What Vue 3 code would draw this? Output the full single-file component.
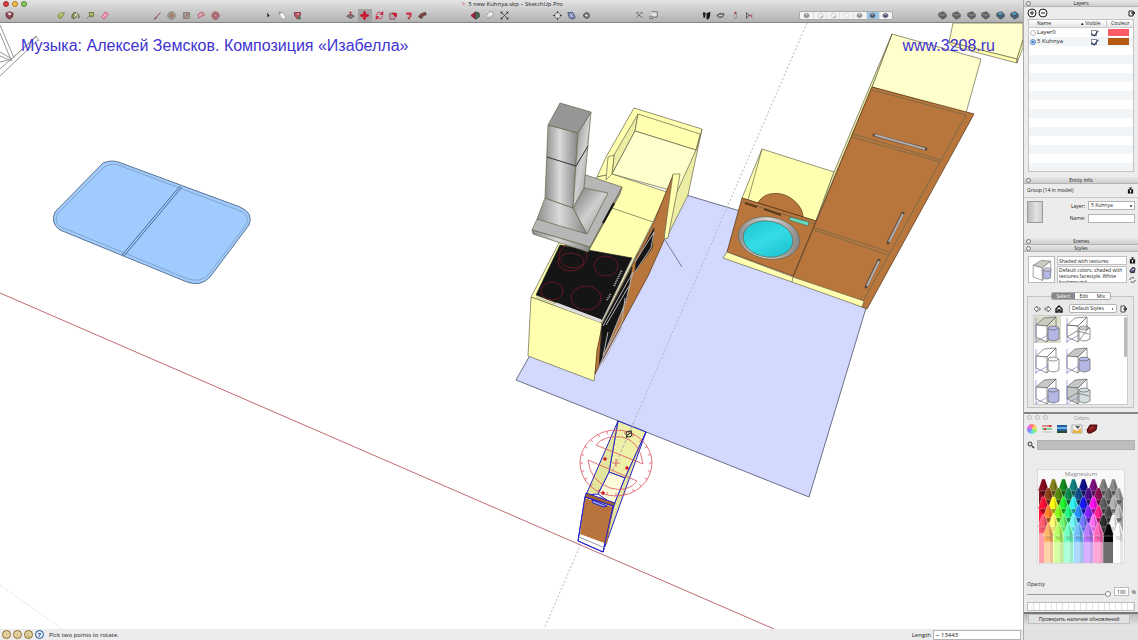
<script setup>
import { ref } from 'vue'

const R = '#b8142e'
const icons = {
  select3d: [['M1 3L6 1L11 3L10 8L6 11L2 8Z', '#8c4450', '#5c2c34'], ['M3 3L6 2L9 4L6 6Z', '#f2dfe0', 'none']],
  tape: [['M1 6Q3 2 10 2L8 6Q7 10 3 10Z', '#a9b45c', '#76803a'], ['M4 5L8 4', 'none', '#e4eaa6']],
  text: [['M1 9Q1 2 6 2Q11 3 11 9L8 7L4 10Z', '#8f9a60', '#4c5238'], ['M5 8L7 3L9 8', 'none', '#fff']],
  paint: [['M1 10L5 6', 'none', '#5c6420'], ['M4 2L10 2L10 7L6 8Z', '#a9b050', '#5e6430'], ['M6 4L8 4', 'none', '#eee']],
  eraser: [['M2 8L7 1L11 4L6 11Z', '#ee92a8', '#c25f78'], ['M4 8L8 4', 'none', '#fbd6de']],
  pencil: [['M2 11L10 2', 'none', '#9c1c34'], ['M2 11L5 8', 'none', '#222']],
  circle: [['M6 1A5 5 0 1 0 6.1 1Z', '#a6a294', '#77736a'], ['M6 4A2 2 0 1 0 6.1 4', '#996', '#a04450']],
  rect: [['M2 2H10V10H2Z', '#a39a92', '#7c7470'], ['M3 9L9 3', 'none', '#a04450']],
  arc: [['M2 9Q0 2 7 2Q12 4 8 7', '#dcb0b6', '#a83850'], ['M2 10L8 5', 'none', '#a83850']],
  polygon: [['M6 1L10 3L11 7L8 11H4L1 7L2 3Z', '#b88088', '#983848'], ['M6 4A2 2 0 1 0 6.1 4', '#c8a0a4', '#883040']],
  arrow: [['M4 2L8 7H6L5 9Z', '#111', 'none']],
  lasso: [['M2 1L7 3L11 9L7 11L3 7Z', '#f6f6f6', '#999'], ['M1 3L4 2', 'none', '#555']],
  bucket: [['M2 2H10L9 9L6 11L2 6Z', '#bc5266', '#7e2438'], ['M5 3H8L7 6Z', '#f3c4cb', 'none'], ['M8 6L11 11H6Z', '#3f7c4a', 'none']],
  push: [['M1 7L6 4L11 7L6 10Z', '#8c7c7c', '#4c4444'], ['M6 6V1M4 3L6 1L8 3', 'none', R]],
  move: [['M6 0L8 3H7V5H9V4L12 6L9 8V7H7V9H8L6 12L4 9H5V7H3V8L0 6L3 4V5H5V3H4Z', '#cc1432', '#cc1432']],
  rotate: [['M2 6A4 4 0 0 1 9 3M10 6A4 4 0 0 1 3 9', 'none', '#d01030'], ['M6 5H11V0Z M6 7H1V12Z', '#d01030', 'none']],
  scale: [['M1 3H8V11H1Z', '#b8a09c', '#846'], ['M4 3H10V8Z', '#c4122c', '#c4122c']],
  offset: [['M3 2H10V8H7V5H3Z', '#cf3048', 'none'], ['M5 8H8V11H5Z', '#a44', 'none']],
  follow: [['M1 8Q2 3 10 2L11 5Q6 5 5 10Z', '#7a4c48', '#452c2a'], ['M5 5L9 3', 'none', '#c33']],
  orbit: [['M0 6L5 2V10Z', '#b02038', '#703'], ['M6 1V11L11 8V3Z', '#4e6d50', '#333']],
  hand: [['M3 10L2 6L6 1H10L11 5L6 10Z', '#f2f2f2', '#8a8a8a'], ['M4 10L7 6', 'none', '#777']],
  extents: [['M1 1L11 11M11 1L1 11', 'none', '#333'], ['M1 1H4L1 4ZM11 1H8L11 4ZM1 11H4L1 8ZM11 11H8L11 8Z', '#222', 'none']],
  compass: [['M6 2A4 4 0 1 0 6.1 2', '#ddd', '#666'], ['M6 0V3M6 9V12M0 6H3M9 6H12', 'none', '#222']],
  globe: [['M1 2H8L11 9L7 11L3 9Z', '#7888b4', '#44507a'], ['M4 4L8 8M8 3L4 8', 'none', '#dde']],
  prev: [['M6 2A4 4 0 1 0 6.1 2', '#999', '#555'], ['M8 3L2 6L8 9Z', '#eee', '#333']],
  axes: [['M2 9L9 2M2 3L10 9M2 2H5', 'none', '#555'], ['M8 1L10 3', 'none', '#222']],
  label: [['M3 1H11V8H6L3 11V8', '#e2e2e2', '#555'], ['M1 7H5V10H1Z', '#ccc', '#666']],
  feet: [['M1 2H5L4 9H2ZM6 3L11 1V6L9 11H6Z', '#181818', 'none']],
  eye: [['M1 6Q5 1 11 4Q10 9 5 9Z', '#8b8b8b', '#444'], ['M4 6H9', 'none', '#ddd']],
  pin: [['M5 2H7V10H5Z', '#eee', '#777'], ['M5 1H7V4H5Z', '#b33', 'none']],
  section: [['M2 2V10L5 6ZM5 6H8', 'none', '#444'], ['M6 5L10 9M10 4L7 7', 'none', R]],
  cube: [['M2 4L6 2L10 4V8L6 10L2 8Z', '#999', '#777'], ['M4 4L6 3L8 4L6 5Z', '#fff', 'none']],
  cubeW: [['M2 4L6 2L10 4V8L6 10L2 8Z', '#f4f4f4', '#bbb'], ['M6 10L10 8', 'none', '#444']],
  cubeD: [['M2 4L6 2L10 4V8L6 10L2 8Z', '#557', '#556'], ['M3 4L6 3L8 4L6 6Z', '#aab6b4', 'none']],
  cubeG: [['M2 4L6 2L10 4V8L6 10L2 8Z', '#fafafa', '#ccc']],
  comp: [['M1 3L7 1L11 4V8L6 11L1 7Z', '#626262', '#555'], ['M2 4L6 6L10 4', 'none', '#aaa']],
  compB: [['M1 3L7 1L11 4V8L6 11L1 7Z', '#4b5f6e', '#4c5862'], ['M2 3L7 2L9 4L5 5Z', '#4fb0dd', 'none']],
}
const groups = [
  { n: 1, items: ['select3d'] },
  { n: 4, items: ['tape', 'text', 'paint', 'eraser'] },
  { n: 5, items: ['pencil', 'circle', 'rect', 'arc', 'polygon'] },
  { n: 3, items: ['arrow', 'lasso', 'bucket'] },
  { n: 6, items: ['push', 'move', 'rotate', 'scale', 'offset', 'follow'], active: 'move' },
  { n: 3, items: ['orbit', 'hand', 'extents'] },
  { n: 3, items: ['compass', 'globe', 'prev'] },
  { n: 2, items: ['axes', 'label'] },
  { n: 4, items: ['feet', 'eye', 'pin', 'section'] },
  { n: 7, seg: true, items: ['cube', 'cubeW', 'cubeW', 'cubeG', 'cube', 'cubeD', 'cubeD'], activeIndex: 5 },
  { n: 6, items: ['comp', 'comp', 'comp', 'comp', 'compB', 'compB'] },
]
const isActive = (g, name, i) => g.active === name || g.activeIndex === i

const layers = ref([
  { name: 'Layer0', visible: true, color: 'red', current: false },
  { name: '5 Kuhnya', visible: true, color: 'brown', current: true },
])
const layerName = ref('5 Kuhnya')
const entityName = ref('')
const styleName = ref('Shaded with textures')
const styleText = ref('Default colors, shaded with textures facestyle. White background.')
const length = ref('~ 13443')
const opacity = ref(100)

const styles = [
  { side: '#c9ccc0', cyl: '#b4b6e4', picked: true },
  { side: 'none', cyl: 'none', wire: true },
  { side: '#fff', cyl: '#fff' },
  { side: '#c8c8c8', cyl: '#b4b6e4' },
  { side: '#c8c8c8', cyl: '#b4b6e4' },
  { side: '#c4c8c8', cyl: '#d5dcdf', wire: true },
]

const palette = [
  ['#850b20', '#85801c', '#168a20', '#118080', '#10108a', '#800f80', '#808080', '#8a8a8a'],
  ['#8e4018', '#568a10', '#108a50', '#10508a', '#4c108a', '#8a1050', '#6c6c6c', '#a0a0a0'],
  ['#ff1038', '#ffff10', '#20f830', '#30f4f4', '#1818f4', '#ff10f0', '#606060', '#b4b4b4'],
  ['#ff8428', '#88ff20', '#20f888', '#2890ff', '#8824ff', '#ff2490', '#484848', '#c4c4c4'],
  ['#ff5c70', '#ffff70', '#70f870', '#70f8f8', '#7078ff', '#ff70f4', '#303030', '#f4f4f4'],
  ['#ffb468', '#b8ff68', '#70ffc0', '#70bcff', '#bc78ff', '#ff68b8', '#080808', '#ffffff'],
]
const crayons = palette.flatMap((row, r) =>
  row.map((color, c) => ({ color, x: 1 + c * 10 + (r % 2) * 5, y: 10 + r * 9, last: r > 3 }))
)

const ticks = Array.from({ length: 24 }, (_, i) => {
  const a = (i * Math.PI) / 12
  return { x1: 616 + 36 * Math.cos(a), y1: 463 + 33 * Math.sin(a), x2: 616 + 33 * Math.cos(a), y2: 463 + 30 * Math.sin(a) }
})
</script>

<template>
  <div class="app">
    <main class="window">
      <header class="chrome">
        <div class="titlebar">
          <div class="lights"><i class="red"></i><i class="amber"></i><i class="green"></i></div>
          <h1><svg viewBox="0 0 6 6"><path d="M1 1L5 2L4 5Z" fill="#d99" /></svg>5 new Kuhnya.skp – SketchUp Pro</h1>
        </div>
        <nav class="toolbar">
          <div v-for="(g, gi) in groups" :key="gi" class="group" :class="['n' + g.n, { seg: g.seg }]">
            <button v-for="(name, i) in g.items" :key="i" type="button" :aria-label="name" :class="{ on: isActive(g, name, i) }">
              <svg viewBox="0 0 12 12"><path v-for="(p, k) in icons[name]" :key="k" :d="p[0]" :fill="p[1]" :stroke="p[2]" /></svg>
            </button>
          </div>
        </nav>
      </header>

      <section class="canvas">
        <svg class="scene" viewBox="0 23 1023 606" preserveAspectRatio="xMinYMin slice">
          <defs>
            <linearGradient id="steel" x1="0" x2="1"><stop offset="0" stop-color="#8e8e8e" /><stop offset=".45" stop-color="#dadada" /><stop offset="1" stop-color="#858585" /></linearGradient>
            <linearGradient id="steel2" x1="0" x2="1" y1="0" y2="1"><stop offset="0" stop-color="#777" /><stop offset=".5" stop-color="#d0d0d0" /><stop offset="1" stop-color="#888" /></linearGradient>
            <linearGradient id="aqua" x1="0" x2="1" y1="0" y2="1"><stop offset="0" stop-color="#1cc4d2" /><stop offset=".5" stop-color="#35dbe6" /><stop offset="1" stop-color="#18bccd" /></linearGradient>
          </defs>
          <g class="thin">
            <path d="M0 25L14 58M0 33L11 60M0 52L12 59M0 56L12 61M0 62L12 59M0 69L37 36M0 76L38 40M36 36L39 41M14 57L36 36" stroke="#999" fill="none" />
            <path d="M0 293L774 629" stroke="#c06a72" />
            <path d="M0 585L62 629" stroke="#ccc" stroke-dasharray="1 2" />
            <path class="floor" d="M516 380L529 357L600 300L686 195L740 211L760 265L866 308L809 497Z" />
            <path d="M807 23L544 629" stroke="#b8b8bc" stroke-dasharray="2 2" />
          </g>

          <g class="sink">
            <path d="M103 163Q112 159 121 163L240 207Q254 213 249 225L210 277Q201 287 187 282L60 230Q50 223 55 212Z" />
            <path d="M104 167Q113 162 121 166L238 210Q251 214 246 225L209 274Q201 283 188 279L61 227Q53 222 58 213Z" class="rim" />
            <path d="M180 186L122 255M182 187L124 256" class="bar" />
          </g>

          <g class="part">
            <path class="y2" d="M702 129L688 195L666 239L677 182L696 150Z" />
            <path class="y1" d="M634 108L702 129L696 150L635 131L612 174L597 177L606 157Z" />
            <path class="y2" d="M638 114L635 131L612 174L614 155Z" />
            <path class="y1" d="M638 114L700 134L696 150L635 131Z" />
            <path class="y3" d="M635 131L696 150L677 192L612 174Z" />
            <path class="y1" d="M597 177L612 174L667 192L653 222L602 323L531 297L559 243Z" />
            <path class="y1" d="M608 157L614 155L612 174L606 180Z" />
            <path d="M612 208L653 222" />
            <path class="y1" d="M531 297L602 323L594 381L528 356Z" />
            <path class="wood" d="M673 175L676 182L665 238L648 276L595 374L597 350L603 323L654 222Z" />
            <path class="y1" d="M673 174L680 174L677 192L668 238L664 239L670 195Z" />
            <path class="black" d="M654 228L652 248L635 272L636 262ZM602 325L632 267L627 298L599 367Z" />
            <path d="M635 262L654 232L651 248L635 272M603 326L633 272L626 301L599 367M608 332L603 356L622 322L625 298M606 325L629 286M603 363L622 327" class="metal" />
            <path d="M632 260L596 377" stroke="none" />
            <path class="black" d="M560 245L632 258L602 320L536 295Z" />
            <path d="M536 297L602 321L632 259" class="metal" />
            <path d="M556 304L601 321" stroke="#ddd" stroke-width="3" />
            <g class="burner">
              <ellipse cx="573" cy="256" rx="14" ry="12" /><ellipse cx="571" cy="262" rx="13" ry="9" />
              <ellipse cx="606" cy="266" rx="12" ry="10" /><ellipse cx="552" cy="291" rx="11" ry="9" /><ellipse cx="586" cy="298" rx="15" ry="12" />
            </g>
            <path d="M607 300L611 293M614 286L622 270" stroke="#bbb" stroke-width="2" stroke-dasharray="1 1" />
            <path d="M665 240L682 267" stroke="#555" />
          </g>

          <g class="part">
            <path fill="#b6b6b6" d="M586 175L622 187L590 247L532 230L537 219Z" />
            <path fill="url(#steel)" d="M532 230L590 247L588 252L533 234Z" />
            <path fill="#999" d="M622 187L620 194L588 252L590 247Z" />
            <path d="M614 203L603 223" stroke="#111" stroke-width="2" />
            <path fill="url(#steel)" d="M545 198L573 208L587 234L537 219Z" />
            <path fill="url(#steel2)" d="M573 208L584 188L608 193L587 234Z" />
            <path fill="url(#steel)" d="M548 125L578 133L573 208L545 198Z" />
            <path fill="url(#steel2)" d="M578 133L591 112L584 188L573 208Z" />
            <path fill="#969696" d="M560 103L591 112L578 133L548 125Z" />
            <path d="M547 157L576 166L588 146" fill="none" stroke="#333" stroke-width="1" />
          </g>

          <g class="part">
            <path class="y3" d="M953 23L949 42L1017 59L1023 40V23Z" />
            <path class="y1" d="M949 42L1017 59L1017 63L952 46ZM1017 59L1023 40V48L1017 63Z" />
            <path class="y3" d="M892 34L981 59L966 113L872 87Z" />
            <path class="y1" d="M762 149L834 172L816 221L742 198Z" />
            <path d="M762 149L748 200" />
            <path class="wood" d="M758 203C764 191 782 191 792 199C799 204 803 211 803 217Z" />
            <path class="y2" d="M892 34L872 87L816 221L834 172Z" />
            <path class="wood" d="M872 87L974 114L867 309L793 277L816 222Z" />
            <path d="M872 90L966 115L941 160L890 253L862 303M853 134L941 160M852 137L940 162M815 228L890 252M814 230L888 255" fill="none" />
            <path class="wood" d="M742 198L816 221L793 276L727 252Z" />
            <path d="M741 201L815 224" />
            <path class="y1" d="M727 252L793 277L864 301L862 307L792 282L723 258ZM793 277L792 282" />
            <path d="M874 135L926 149" class="handle" /><path d="M875 135L925 149" class="shine" />
            <path d="M903 213L888 243M879 260L866 287" class="handle" /><path d="M903 214L889 242M879 261L867 286" class="shine" />
            <ellipse cx="769" cy="238" rx="31" ry="21" transform="rotate(9 769 238)" fill="url(#steel)" />
            <ellipse cx="768" cy="239" rx="25" ry="18" transform="rotate(9 768 239)" fill="url(#aqua)" />
            <path d="M745 203L757 207M764 209L781 215" stroke="#5c3a1c" stroke-width="2" />
            <path d="M790 217L809 222L808 226L789 220Z" fill="#61dcc0" />
          </g>

          <g class="picked">
            <path fill="#eff0a8" d="M618 421L646 432L625 478L609 472Z" />
            <path fill="#fbfbdc" d="M609 472L625 478L614 505L598 494Z" />
            <path fill="#e4e59c" d="M618 421L609 472L598 494L586 495Z" />
            <path fill="#e4e59c" d="M646 432L603 552L614 505L625 478Z" />
            <path fill="#a26232" d="M586 493L615 503L613 507L585 497Z" />
            <path fill="#fff" d="M585 497L613 506L603 552L578 541Z" />
            <path fill="#b8743c" stroke="none" d="M585 498L613 507L607 544L580 534Z" />
            <path fill="none" d="M585 497L613 506L603 552L578 541Z" />
            <path fill="none" stroke="#99a" d="M579 537L605 548" />
            <path fill="#a9b4e8" d="M592 500L607 506L604 507L593 503Z" />
          </g>
          <path d="M634 422L610 477" stroke="#aaa" stroke-dasharray="3 2" />
          <g class="protractor">
            <ellipse cx="616" cy="463" rx="36" ry="33" />
            <path v-for="(t, i) in ticks" :key="i" :d="`M${t.x1} ${t.y1}L${t.x2} ${t.y2}`" />
            <path d="M596 445L643 464Q640 441 622 437Q604 435 596 445ZM588 460L637 481Q628 493 610 488Q590 481 588 460ZM612 463H620M616 459V467" />
            <path d="M603 459L605 457L607 459L605 461ZM625 468L627 466L629 468L627 470ZM601 493L603 491L605 493L603 495Z" fill="#d02020" />
          </g>
          <g fill="none" stroke="#222"><circle cx="629" cy="434" r="3" /><path d="M627 435L631 433M631 430V432M626 438L627 436" /></g>
        </svg>
        <p class="credit">Музыка: Алексей Земсков. Композиция «Изабелла»</p>
        <a class="site" href="#site">www.3208.ru</a>
      </section>

      <footer class="status">
        <button type="button" class="dot">!</button><button type="button" class="dot">i</button><button type="button" class="dot">L</button><button type="button" class="dot help">?</button>
        <span class="hint">Pick two points to rotate.</span>
        <label for="len">Length</label><input id="len" v-model="length" type="text" />
      </footer>
    </main>

    <aside class="side">
      <section class="inspector">
        <h2><i></i>Layers</h2>
        <div class="layertools">
          <button type="button" aria-label="Add layer"><svg viewBox="0 0 10 10"><circle cx="5" cy="5" r="4" /><path d="M5 3V7M3 5H7" /></svg></button>
          <button type="button" aria-label="Delete layer"><svg viewBox="0 0 10 10"><circle cx="5" cy="5" r="4" /><path d="M3 5H7" /></svg></button>
          <button type="button" class="end" aria-label="Layer details"><svg viewBox="0 0 10 10"><path d="M3 3H7V8H3ZM5 5H9M7 3L9 5L7 7" /></svg></button>
        </div>
        <div class="tablewrap">
          <table>
            <thead><tr><th class="c0"></th><th>Name</th><th class="c2">▴ Visible</th><th class="c3">Couleur</th></tr></thead>
            <tbody>
              <tr v-for="l in layers" :key="l.name">
                <td><input type="radio" name="layer" :checked="l.current" :aria-label="'Current ' + l.name" /></td>
                <td>{{ l.name }}</td>
                <td class="mid"><input v-model="l.visible" type="checkbox" :aria-label="'Visible ' + l.name" /></td>
                <td><span class="swatch" :class="l.color"></span></td>
              </tr>
              <tr v-for="n in 14" :key="n"><td colspan="4"></td></tr>
            </tbody>
          </table>
        </div>

        <h2><i></i>Entity Info</h2>
        <div class="entity">
          <div class="row"><span>Group (14 in model)</span><svg class="mini" viewBox="0 0 8 8"><path d="M1 3H7V8H1ZM2 1H6L4 3Z" fill="#111" /><path d="M4 4V7M3 5H5" stroke="#fff" /></svg></div>
          <div class="fields">
            <div class="mat"></div>
            <label for="lay">Layer:</label>
            <select id="lay" v-model="layerName"><option>5 Kuhnya</option><option>Layer0</option></select>
            <label for="nam">Name:</label>
            <input id="nam" v-model="entityName" type="text" />
          </div>
        </div>

        <h2><i></i>Scenes</h2>
        <h2><i></i>Styles</h2>
        <div class="stylehead">
          <div class="preview"><svg viewBox="0 0 30 30"><path d="M5 10L15 4L26 5L16 13Z" fill="#c9ccc0" /><path d="M5 10L16 13V28L5 24Z" fill="#fff" /><path d="M16 13L26 5V20L16 28Z" fill="#fff" /><path d="M17 15V25Q22 28 26 25V15Z" fill="#b4b6e4" /><ellipse cx="22" cy="15" rx="5" ry="2" fill="#ccd" /></svg></div>
          <div class="desc"><input v-model="styleName" type="text" aria-label="Style name" /><textarea v-model="styleText" aria-label="Style description"></textarea></div>
          <div class="acts">
            <svg viewBox="0 0 8 8"><path d="M1 3H7V8H1ZM2 1H6L4 3Z" fill="#111" /><path d="M4 4V7M3 5H5" stroke="#fff" /></svg>
            <svg viewBox="0 0 8 8"><path d="M1 5L4 1L7 2L6 7L2 7Z" fill="#557" stroke="#223" /><path d="M3 4L6 3" stroke="#fff" /></svg>
            <svg viewBox="0 0 8 8"><path d="M1 4A3 3 0 0 1 6 2M7 4A3 3 0 0 1 2 6" fill="none" stroke="#444" /></svg>
          </div>
        </div>
        <div class="browser">
          <div class="tabs"><button type="button" class="on">Select</button><button type="button">Edit</button><button type="button">Mix</button></div>
          <div class="navrow">
            <button type="button" aria-label="Back"><svg viewBox="0 0 8 8"><path d="M4 1L1 4L4 7V5H7V3H4Z" /></svg></button>
            <button type="button" aria-label="Forward"><svg viewBox="0 0 8 8"><path d="M4 1L7 4L4 7V5H1V3H4Z" /></svg></button>
            <button type="button" aria-label="Home"><svg viewBox="0 0 8 8"><path d="M1 4L4 1L7 4V7H5V5H3V7H1Z" stroke="#111" stroke-width="1.4" /></svg></button>
            <select aria-label="Style collection"><option>Default Styles</option></select>
            <button type="button" aria-label="Details"><svg viewBox="0 0 8 8"><path d="M1 1H5V7H1ZM3 4H7L5 2V6L7 4" stroke="#222" /></svg></button>
          </div>
          <div class="thumbs">
            <button v-for="(s, i) in styles" :key="i" type="button" :aria-label="'Style ' + (i + 1)" :class="{ picked: s.picked }">
              <svg viewBox="0 0 27 27">
                <path d="M2 9L10 2L22 1L13 10Z" :fill="s.side" /><path d="M2 9L13 10V26L2 21Z" :fill="s.wire ? s.side : '#fff'" /><path d="M13 10L22 1V14L13 26" fill="none" />
                <path d="M14 12V23Q19 27 25 23V12Z" :fill="s.cyl" /><ellipse cx="19" cy="12" rx="5" ry="2" :fill="s.cyl" />
                <path v-if="s.wire" d="M2 21L12 15L24 18" fill="none" />
                <path d="M2 2V27M1 26L14 19" stroke="#88c" fill="none" />
              </svg>
            </button>
            <i class="scroll"></i>
          </div>
        </div>
      </section>

      <section class="colors">
        <h2><i></i><i></i><i></i><span>Colors</span></h2>
        <div class="modes">
          <button type="button" class="wheel" aria-label="Wheel"></button>
          <button type="button" aria-label="Sliders"><svg viewBox="0 0 12 10"><path fill="#eee" d="M1 0H11V10H1Z" /><path stroke="#d88" d="M1 2H11" stroke-width="2" /><path stroke="#8c9" d="M1 5H11" stroke-width="2" /><path stroke="#bbb" d="M1 8H11" /><path fill="#c33" d="M8 1H10V3H8ZM3 4H5V6H3Z" /></svg></button>
          <button type="button" aria-label="Palettes"><svg viewBox="0 0 12 10"><path fill="#235e9e" d="M1 1H11V9H1Z" /><path fill="#6ab4e0" d="M1 3H11V5H1Z" /><path fill="#2c4a2c" d="M1 7H11V9H1Z" /></svg></button>
          <button type="button" aria-label="Image"><svg viewBox="0 0 12 10"><path fill="#f3f3f3" stroke="#aaa" d="M1 1H11V9H1Z" /><path fill="#e8b23c" d="M2 5L6 7L10 4V9H2Z" /><path fill="#555" d="M4 2H9L7 5Z" /></svg></button>
          <button type="button" aria-label="Crayons"><svg viewBox="0 0 12 10"><path fill="#7c1818" stroke="#4a0c0c" d="M1 6L4 1L11 1L10 6L5 9L2 9Z" /><path stroke="#c44" d="M4 5L8 3" /></svg></button>
        </div>
        <div class="search"><svg viewBox="0 0 8 8"><circle cx="3" cy="3" r="2" fill="none" stroke="#333" /><path d="M5 5L7 7" stroke="#333" stroke-width="1.5" /></svg><span class="current"></span></div>
        <div class="crayonbox">
          <p>Magnesium</p>
          <svg viewBox="0 10 86 84">
            <g v-for="(c, i) in crayons" :key="i">
              <rect :x="c.x" :y="c.y + 10" width="9" height="86" :fill="c.color" />
              <rect :x="c.x + 6" :y="c.y + 10" width="3" height="86" fill="#000" opacity=".16" />
              <path :d="`M${c.x - 1} ${c.y + 12}L${c.x + 3} ${c.y}H${c.x + 6}L${c.x + 10} ${c.y + 12}Z`" :fill="c.color" stroke="#fff" stroke-opacity=".5" stroke-width=".6" />
              <path :d="`M${c.x + 5} ${c.y}L${c.x + 9} ${c.y + 12}H${c.x + 6}Z`" fill="#000" opacity=".22" />
              <path :d="`M${c.x + 1} ${c.y + 12}H${c.x + 8}L${c.x + 6} ${c.y + 16}H${c.x + 3}Z`" fill="#000" :opacity="c.last ? 0.12 : 0.4" />
              <rect v-if="c.last" :x="c.x" :y="c.y + 18" width="9" height="80" fill="#fff" opacity=".42" />
            </g>
          </svg>
        </div>
        <label class="oplabel" for="op">Opacity</label>
        <div class="oprow"><input id="op" v-model="opacity" type="range" min="0" max="100" /><input v-model="opacity" class="num" type="text" aria-label="Opacity percent" /><span>%</span></div>
        <div class="wells"><i v-for="n in 18" :key="n"></i></div>
      </section>

      <section class="under"><button type="button">Проверить наличие обновлений</button></section>
    </aside>
  </div>
</template>

<style>
html, body { background: #fff; overflow: hidden; }
</style>

<style scoped>
* { box-sizing: border-box; }
.app { display: grid; grid-template-columns: minmax(0, 1fr) 115px; height: 100vh; font: 6px/8px "Open Sans", "Noto Sans", sans-serif; color: #222; overflow: hidden; }
button, input, select, textarea { font: inherit; color: inherit; margin: 0; padding: 0; border: 0; background: none; border-radius: 0; appearance: none; outline: 0; }
svg { display: block; }
h1, h2, p { margin: 0; font-weight: 400; font-size: 6px; }
.window { display: flex; flex-direction: column; min-width: 0; height: 100vh; }
.chrome { background: linear-gradient(#e4e4e4, #d2d2d2 35%, #b2b2b2); border-bottom: 1px solid #858585; height: 23px; overflow: hidden; }
.titlebar { height: 8px; display: grid; grid-template-columns: 1fr auto 1fr; align-items: center; }
.titlebar h1 { display: flex; align-items: center; gap: 2px; }
.titlebar h1 svg { width: 6px; height: 6px; }
.lights { display: flex; gap: 3px; padding-left: 3px; }
.lights i { width: 6px; height: 6px; border-radius: 50%; border: 1px solid #777; }
.lights .red { background: #e23c40; border-color: #9c3034; }
.lights .amber { background: #f3c050; border-color: #ad7c28; }
.lights .green { background: #90c860; border-color: #4e8438; }
.toolbar { display: flex; gap: 38px; padding-left: 2px; height: 15px; align-items: center; }
.group { display: grid; grid-auto-flow: column; grid-auto-columns: 1fr; height: 13px; flex: none; }
.n1 { width: 14px; } .n2 { width: 29px; } .n3 { width: 44px; } .n4 { width: 58px; } .n5 { width: 73px; } .n6 { width: 87px; }
.n7 { width: 94px; }
.group button { display: grid; place-items: center; }
.group svg { width: 9px; height: 9px; }
.group .on { background: #a2a2a2; }
.seg { margin: 0 4px; background: #f3f3f3; border: 1px solid #aaa; border-radius: 2px; height: 9px; align-self: center; }
.seg svg { width: 7px; height: 7px; }
.seg button + button { border-left: 1px solid #dedede; }
.seg .on { background: #9cc8e8; }
.canvas { position: relative; flex: 1; min-height: 0; overflow: hidden; background: #fff; }
.scene { width: 100%; height: 100%; }
.thin { stroke-width: 1; }
.floor { fill: #d3d8ff; stroke: #6c7088; }
.sink path { fill: #a0cbff; stroke: #5c7590; }
.sink .rim { fill: none; stroke: #83a4c8; }
.sink .bar { stroke: #486a94; }
.part { stroke: #66654c; stroke-width: .7; }
.part .y1 { fill: #ffffaf; } .part .y2 { fill: #ededa4; } .part .y3 { fill: #ffffcc; }
.part .wood { fill: #b9763c; stroke: #4f2f12; }
.part .black { fill: #151516; stroke: #222; }
.part .metal { fill: none; stroke: #b4b4b4; stroke-width: 1; }
.burner { fill: none; stroke: #641822; stroke-width: 1; }
.handle { stroke: #5c4c40; stroke-width: 3; stroke-linecap: round; }
.shine { stroke: #b0acac; stroke-width: 2; }
.picked { stroke: #2422c4; stroke-width: 1; stroke-linejoin: round; }
.protractor { fill: none; stroke: #dc5260; stroke-width: .8; }
.credit, .site { position: absolute; top: 13px; font: 16px/20px "Liberation Sans", Arial, sans-serif; color: #3e33d2; white-space: nowrap; text-decoration: none; }
.credit { left: 21px; }
.site { right: 28px; }
.status { height: 11px; background: #ececec; display: flex; align-items: center; padding: 0 2px; gap: 2px; }
.dot { width: 9px; height: 9px; border: 1px solid #8a6c30; border-radius: 50%; background: #e6d3a2; font-size: 5px; line-height: 6px; color: #a07c34; text-align: center; }
.help { background: #e2ecfa; border-color: #24508c; color: #123c80; font-weight: 700; font-size: 6px; }
.hint { flex: 1; padding-left: 3px; }
.status input { width: 88px; height: 10px; background: #fff; border: 1px solid #b4b4b4; padding-left: 2px; }

.side { display: flex; flex-direction: column; border-left: 1px solid #aaa; background: #ececec; min-width: 0; height: 100vh; overflow: hidden; font-size: 5px; }
.side h2 { position: relative; height: 7px; line-height: 7px; font-size: 5px; text-align: center; background: linear-gradient(#e8e8e8, #cecece); border-bottom: 1px solid #b4b4b4; }
.inspector h2 i { position: absolute; left: 2px; top: 1px; width: 5px; height: 5px; border: 1px solid #777; border-radius: 50%; background: #eee; }
.inspector { border-bottom: 2px solid #858585; height: 414px; flex: none; }
.layertools { display: flex; gap: 1px; padding: 1px 2px 1px 3px; height: 12px; align-items: center; }
.layertools svg { width: 10px; height: 10px; fill: #f3f3f3; stroke: #222; }
.layertools .end { margin-left: auto; }
.tablewrap { margin: 0 4px 5px; background: #fff; border: 1px solid #c4c4c4; height: 153px; overflow: hidden; }
table { width: 100%; border-collapse: collapse; table-layout: fixed; }
th { height: 7px; padding: 0; font-weight: 400; line-height: 7px; background: linear-gradient(#fff, #e4e4e4); border-bottom: 1px solid #ccc; text-align: left; padding-left: 1px; }
td { height: 9px; line-height: 9px; padding: 0 0 0 1px; font-size: 6px; white-space: nowrap; }
tbody tr:nth-child(even) { background: #f1f5f8; }
.c0 { width: 7px; } .c2 { width: 26px; } .c3 { width: 27px; border-left: 1px solid #ccc; text-align: center; }
.mid { text-align: center; }
td input { display: block; width: 6px; height: 6px; border: 1px solid #aaa; background: #fff; position: relative; }
td input[type=radio] { border-radius: 50%; border-color: #bbb; }
td input[type=radio]:checked { background: #2b63b8; border: 1px solid #7fa7dc; box-shadow: inset 0 0 0 1px #cfe2f8; }
td input[type=checkbox] { margin: 0 auto; border-color: #889; }
td input[type=checkbox]:checked::after { content: ""; position: absolute; left: 1px; top: -2px; width: 3px; height: 6px; border: solid #1d2c50; border-width: 0 1px 1px 0; transform: rotate(40deg); }
.swatch { display: block; width: 21px; height: 7px; margin-left: 1px; }
.swatch.red { background: #fb5b68; } .swatch.brown { background: #b55a10; }
.entity { height: 54px; }
.row { display: flex; justify-content: space-between; align-items: center; padding: 0 4px 2px 3px; height: 14px; border-bottom: 1px solid #c8c8c8; }
.mini { width: 7px; height: 8px; }
.fields { display: grid; grid-template-columns: 16px 1fr 47px; gap: 3px 3px; padding: 3px 3px; align-items: center; text-align: right; }
.mat { grid-row: span 2; height: 22px; border: 1px solid #999; background: linear-gradient(90deg, #bbb, #e4e4e4 60%, #ccc); }
.fields select, .fields input, .navrow select { height: 9px; line-height: 7px; background: #fff; border: 1px solid #b4b4b4; padding-left: 2px; width: 100%; min-width: 0; }
.fields select { background: #fff linear-gradient(#666, #666) 41px 3px / 2px 2px no-repeat; }
.stylehead { display: grid; grid-template-columns: 27px 1fr 7px; gap: 2px; padding: 4px 2px 0 4px; height: 38px; }
.preview { height: 27px; background: #fff; border: 1px solid #bbb; }
.preview svg, .thumbs svg { width: 100%; height: 100%; stroke: #666; stroke-width: .7; }
.desc { display: grid; grid-template-rows: 9px 17px; gap: 1px; min-width: 0; }
.desc input, .desc textarea { display: block; width: 100%; height: 100%; background: #fff; border: 1px solid #c0c0c0; padding: 0 0 0 1px; line-height: 6px; resize: none; overflow: hidden; }
.acts { display: grid; gap: 2px; align-content: start; }
.acts svg { width: 7px; height: 8px; }
.browser { margin: 6px 4px 0 3px; border: 1px solid #c4c4c4; height: 112px; background: #e8e8e8; padding: 0 5px; }
.tabs { display: flex; width: 60px; margin: -5px auto 0; height: 8px; border: 1px solid #aaa; border-radius: 2px; background: #fff; overflow: hidden; }
.tabs button { flex: 1; line-height: 6px; }
.tabs .on { background: #888; color: #fff; flex: 1.4; }
.navrow { display: flex; align-items: center; gap: 3px; padding: 4px 0 2px; }
.navrow button { width: 8px; flex: none; }
.navrow svg { width: 8px; height: 8px; fill: #fff; stroke: #555; stroke-width: .8; }
.navrow select { flex: 1; margin-left: 3px; border-radius: 2px; background: #fff linear-gradient(#777, #777) calc(100% - 3px) 3px / 1px 2px no-repeat; }
.thumbs { position: relative; display: grid; grid-template-columns: 27px 27px; grid-auto-rows: 27px; gap: 4px; height: 90px; overflow: hidden; background: #fff; border: 1px solid #ccc; }
.thumbs .picked { background: #dcdccb; }
.scroll { position: absolute; right: 0; top: 1px; width: 3px; height: 40px; border-radius: 2px; background: #bbb; }
.colors { border-bottom: 2px solid #777; height: 200px; flex: none; background: #ebebeb; }
.colors h2 { background: none; border: 0; color: #888; height: 8px; display: flex; gap: 3px; padding: 1px 0 0 3px; }
.colors h2 i { width: 5px; height: 5px; border: 1px solid #bbb; border-radius: 50%; }
.colors h2 span { margin-left: 23px; }
.modes { display: flex; gap: 3px; padding: 1px 3px; height: 13px; align-items: center; }
.modes button, .modes svg { width: 12px; height: 10px; }
.modes .wheel { width: 10px; border-radius: 50%; margin-right: 1px; background: conic-gradient(#f77, #fd6, #8e6, #6de, #78f, #e6e, #f77); }
.search { display: flex; align-items: center; gap: 2px; padding: 0 3px; margin-top: 5px; }
.search svg { width: 8px; height: 8px; }
.current { flex: 1; height: 10px; background: #bebebe; border: 1px solid #b0b0b0; }
.crayonbox { width: 88px; margin: 19px auto 0; background: #f8f8f8; border: 1px solid #ddd; height: 95px; }
.crayonbox p { height: 9px; line-height: 8px; text-align: center; color: #888; }
.crayonbox svg { width: 86px; height: 84px; }
.oplabel { display: block; margin: 17px 0 0 3px; height: 7px; line-height: 7px; }
.oprow { display: flex; align-items: center; gap: 3px; padding: 0 2px 0 3px; height: 11px; margin-top: -2px; }
.oprow input[type=range] { flex: 1; min-width: 0; height: 6px; margin-top: 4px; background: linear-gradient(#999, #999) 0 3px / 100% 1px no-repeat; }
.oprow input[type=range]::-webkit-slider-thumb { appearance: none; width: 6px; height: 6px; border: 1px solid #888; border-radius: 50%; background: #fff; }
.num { width: 15px; height: 9px; border: 1px solid #bbb; background: #fff; text-align: center; }
.wells { display: flex; margin: 5px 3px 0; height: 9px; border: 1px solid #bbb; background: #fff; }
.wells i { flex: 1; border-right: 1px solid #e2e2e2; }
.under { flex: 1; background: linear-gradient(#bbb, #e4e4e4 12px, #e0e0e0); padding: 0 8px 0 4px; }
.under button { display: block; width: 100%; height: 10px; line-height: 8px; background: #e2e2e2; border: 1px solid #c0c0c0; white-space: nowrap; }
</style>
